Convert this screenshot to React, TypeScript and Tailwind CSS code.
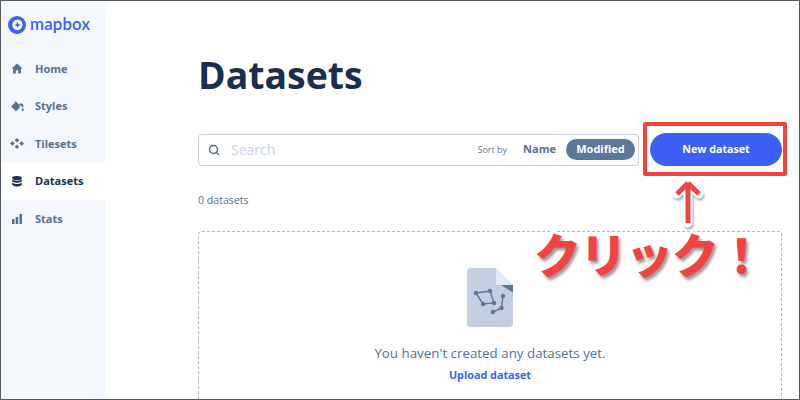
import { Search } from 'lucide-react';

const navItems = [
  { label: 'Home', icon: <HomeIcon /> },
  { label: 'Styles', icon: <StylesIcon /> },
  { label: 'Tilesets', icon: <TilesetsIcon /> },
  { label: 'Datasets', icon: <DatasetsIcon />, active: true },
  { label: 'Stats', icon: <StatsIcon /> },
];

function HomeIcon() {
  return (
    <svg width="12" height="11" viewBox="0 0 13 12" fill="currentColor">
      <path d="M6.5 0.5 L12.5 6 L10.8 6 L10.8 11.5 L7.8 11.5 L7.8 8 L5.2 8 L5.2 11.5 L2.2 11.5 L2.2 6 L0.5 6 Z" />
    </svg>
  );
}

function StylesIcon() {
  return (
    <svg width="13" height="12" viewBox="0 0 13 12" fill="currentColor">
      <path d="M4.5 1 L8.6 5 L8.6 8 L5.6 10.8 Q5 11.2 4.4 10.8 L0.6 7 Q0 6.4 0.6 5.8 L4 2.6 Z" />
      <path d="M8.6 3.6 L10.5 3.6 Q12.4 3.6 12.4 6 L12.4 7.4 L10.8 7.4 L10.8 6.4 Q10.8 5.8 10 5.8 L8.6 5.8 Z" />
      <circle cx="11.6" cy="9.6" r="1.2" />
    </svg>
  );
}

function TilesetsIcon() {
  return (
    <svg width="14" height="11" viewBox="0 0 14 11" fill="currentColor">
      <path d="M7 0 L9.2 2.2 L7 4.4 L4.8 2.2 Z" />
      <path d="M2.4 3.2 L4.8 5.5 L2.4 7.8 L0 5.5 Z" />
      <path d="M11.6 3.2 L14 5.5 L11.6 7.8 L9.2 5.5 Z" />
      <path d="M7 6.6 L9.2 8.8 L7 11 L4.8 8.8 Z" />
    </svg>
  );
}

function DatasetsIcon() {
  return (
    <svg width="10" height="11" viewBox="0 0 10 11" fill="currentColor">
      <ellipse cx="5" cy="2" rx="4.8" ry="2" />
      <path d="M0.2 3.4 Q5 6.2 9.8 3.4 L9.8 5.4 Q5 8 0.2 5.4 Z" />
      <path d="M0.2 6.8 Q5 9.4 9.8 6.8 L9.8 9 Q5 12 0.2 9 Z" />
    </svg>
  );
}

function StatsIcon() {
  return (
    <svg width="10" height="10" viewBox="0 0 10 10" fill="currentColor">
      <rect x="0" y="5" width="2.5" height="5" />
      <rect x="3.7" y="3" width="2.5" height="7" />
      <rect x="7.5" y="0" width="2.5" height="10" />
    </svg>
  );
}

function MapboxMark() {
  return (
    <svg width="18" height="18" viewBox="0 0 18 18">
      <circle cx="9" cy="9" r="9" fill="#3d5ff5" />
      <circle cx="9.4" cy="8.8" r="5.2" fill="#f4f7fb" />
      <path d="M9.5 5.8 L10.5 8 L12.6 8.9 L10.5 9.8 L9.5 12 L8.5 9.8 L6.4 8.9 L8.5 8 Z" fill="#3d5ff5" />
    </svg>
  );
}

function EmptyFileIcon() {
  return (
    <svg width="46" height="59" viewBox="0 0 46 59">
      <path d="M4 0 L29 0 L46 17 L46 55 Q46 59 42 59 L4 59 Q0 59 0 55 L0 4 Q0 0 4 0 Z" fill="#c3cfe0" />
      <path d="M29 0 L46 17 L29 17 Z" fill="#e3e9f6" />
      <path d="M34 17 L46 17 L46 24.5 Z" fill="#5b7799" />
      <g fill="none" stroke="#5b7799" strokeWidth="1.4">
        <path d="M9 25 L23 23 L27 35 L16 36 Z" />
        <path d="M36 28 L34.5 40 L26 44" />
      </g>
      <g fill="#5b7799">
        <circle cx="9" cy="25" r="2.2" />
        <circle cx="23" cy="23" r="2.2" />
        <circle cx="27" cy="35" r="2.2" />
        <circle cx="16" cy="36" r="2.2" />
        <circle cx="36" cy="28" r="2.2" />
        <circle cx="34.5" cy="40" r="2.2" />
        <circle cx="26" cy="44" r="2.2" />
      </g>
    </svg>
  );
}

export default function App() {
  return (
    <div className="relative flex w-[800px] h-[400px] overflow-hidden bg-white border border-[#555a60] font-['Open_Sans',sans-serif]">
      {/* Sidebar */}
      <aside className="w-[104px] shrink-0 bg-[#f4f7fb] flex flex-col">
        <div className="flex items-center gap-[4px] pl-[7px] pb-[2px] h-[49px]">
          <MapboxMark />
          <span className="font-['Lato',sans-serif] font-semibold text-[16.8px] leading-none tracking-[0.2px] text-[#3d5ff5]">mapbox</span>
        </div>
        <nav className="flex flex-col">
          {navItems.map((item) => (
            <div
              key={item.label}
              className={`flex items-center h-[37.6px] ${item.active ? 'bg-white text-[#1b2e4b]' : 'text-[#56718f]'}`}
            >
              <div className="w-[34px] flex justify-center pl-[1px] pr-[3px]">{item.icon}</div>
              <span className="text-[11px] font-bold">{item.label}</span>
            </div>
          ))}
        </nav>
      </aside>

      {/* Main */}
      <main className="flex-1 pl-[93px] pr-[17px]">
        <h1 className="mt-[49px] text-[37.4px] leading-[50px] font-bold text-[#1b2e4b]">Datasets</h1>

        <div className="flex items-center gap-[11px] mt-[33px]">
          <div className="flex-1 h-[32px] flex items-center rounded-[4px] border border-[#c3cfdc] pl-[9px] pr-[3px]">
            <Search className="w-[12px] h-[12px] text-[#4f6c8d]" strokeWidth={3} />
            <span className="ml-[11px] text-[14px] text-[#ccd5e2]">Search</span>
            <span className="ml-auto text-[9px] text-[#5f7a98]">Sort by</span>
            <span className="ml-[16px] text-[11px] font-bold text-[#56718f]">Name</span>
            <span className="ml-[10px] h-[21px] w-[69px] rounded-full bg-[#5b7799] text-white text-[11px] font-bold flex items-center justify-center">Modified</span>
          </div>
          <button className="w-[132px] h-[33px] rounded-full bg-[#3d5ff5] text-white text-[10.7px] font-bold">New dataset</button>
        </div>

        <p className="mt-[26px] text-[10.6px] leading-[16px] text-[#56718f]">0 datasets</p>

        <div className="mt-[23px] h-[200px] rounded-[4px] border border-dashed border-[#a9b8cb] flex flex-col items-center pt-[36px]">
          <EmptyFileIcon />
          <p className="mt-[17px] text-[13.35px] leading-[18px] text-[#56718f]">You haven't created any datasets yet.</p>
          <a className="mt-[5px] text-[10.8px] leading-[16px] font-bold text-[#3d5ff5]">Upload dataset</a>
        </div>
      </main>

      {/* Annotation */}
      <div className="absolute left-[642px] top-[121px] w-[144px] h-[54px] rounded-[2px] border-[4px] border-[#f04344]" />
      <svg className="absolute left-[670px] top-[176px] drop-shadow-[1px_2px_1px_rgba(0,0,0,0.35)]" width="34" height="52" viewBox="0 0 34 52">
        <path d="M17 6 L28 17 M17 6 L6 17 M17 6 L17 46" fill="none" stroke="#fff" strokeWidth="9" strokeLinecap="round" strokeLinejoin="round" />
        <path d="M17 6 L28 17 M17 6 L6 17 M17 6 L17 46" fill="none" stroke="#f04344" strokeWidth="5" strokeLinejoin="miter" />
      </svg>
      <div className="absolute left-[533px] top-[222px] text-[47px] leading-[60px] tracking-[-1px] whitespace-nowrap font-black text-[#f04344] font-['Noto_Sans_CJK_JP',sans-serif] [-webkit-text-stroke:5px_#fff] [paint-order:stroke_fill] [text-shadow:2px_3px_3px_rgba(0,0,0,0.4)]">
        クリック！
      </div>
    </div>
  );
}
